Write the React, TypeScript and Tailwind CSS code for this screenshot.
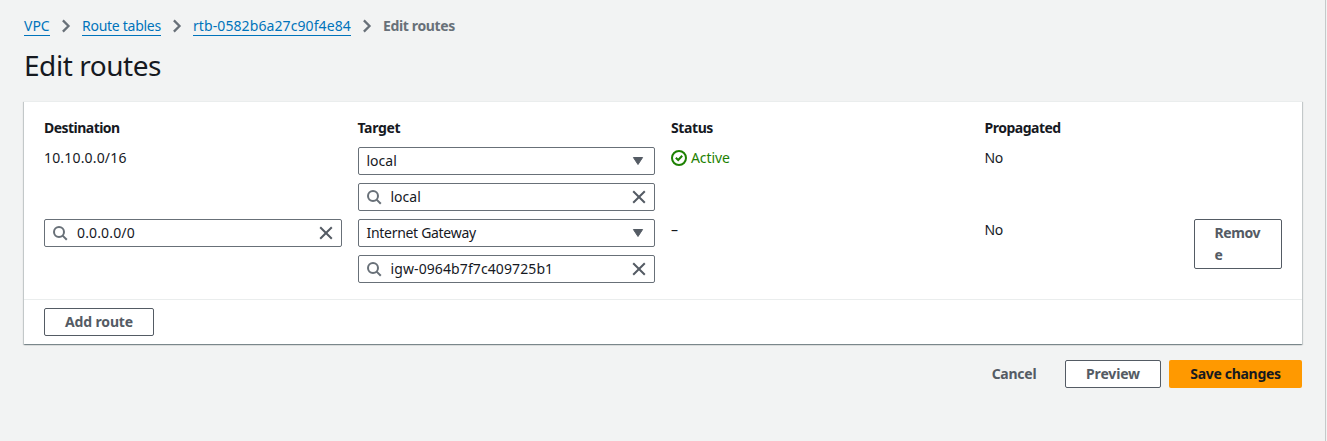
import type { ReactNode } from "react";

function Chevron() {
  return (
    <svg viewBox="0 0 16 16" className="size-4 shrink-0" fill="none" stroke="#687078" strokeWidth="2.3">
      <path d="M4.9 2.4 10.5 8l-5.6 5.6" />
    </svg>
  );
}

function SearchIcon() {
  return (
    <svg viewBox="0 0 16 16" className="size-4 shrink-0" fill="none" stroke="#687078" strokeWidth="2">
      <circle cx="7" cy="7" r="5" />
      <path d="m10.6 10.6 4.2 4.2" />
    </svg>
  );
}

function CloseIcon() {
  return (
    <svg viewBox="0 0 16 16" className="size-4 shrink-0" fill="none" stroke="#545b64" strokeWidth="2">
      <path d="m2.2 2.2 11.6 11.6M13.8 2.2 2.2 13.8" />
    </svg>
  );
}

function CaretDown() {
  return (
    <svg viewBox="0 0 16 16" className="size-4 shrink-0" fill="#545b64" stroke="#545b64" strokeLinejoin="round">
      <path d="M3.4 4.5h9.2L8 11.5z" />
    </svg>
  );
}

function StatusOk() {
  return (
    <svg viewBox="0 0 16 16" className="size-4 shrink-0" fill="none" stroke="#1d8102" strokeWidth="2">
      <circle cx="8" cy="8" r="7" />
      <path d="m4.8 7.8 2.4 2.2 4-4.2" />
    </svg>
  );
}

function Select({ children }: { children: ReactNode }) {
  return (
    <div className="flex h-7 items-center justify-between rounded-xs border border-[#687078] bg-white pr-2 pl-2">
      {children}
      <CaretDown />
    </div>
  );
}

function SearchInput({ children }: { children: ReactNode }) {
  return (
    <div className="flex h-7 items-center rounded-xs border border-[#687078] bg-white px-[7px]">
      <SearchIcon />
      <div className="ml-[9px] flex-1">{children}</div>
      <CloseIcon />
    </div>
  );
}

const button = "rounded-xs border border-[#545b64] bg-white font-bold text-[#545b64]";
const link = "h-[21px] self-start whitespace-nowrap border-b border-[#0073bb] leading-[22px]";

export default function App() {
  return (
    <div className="flex h-[441px] w-[1327px] bg-[#f2f3f3] font-['Noto_Sans',sans-serif] text-sm leading-[22px] text-[#16191f]">
      <div className="flex w-[1326px] flex-col border-r border-[#c5caca] pr-[23px] pl-6">
        <nav className="mt-[15px] flex h-[22px] items-center gap-2 text-[#0073bb]">
          <a className={`${link} w-[26px]`}>VPC</a>
          <Chevron />
          <a className={`${link} w-[79px] tracking-[-0.27px]`}>Route tables</a>
          <Chevron />
          <a className={`${link} w-[158px] tracking-[0.09px]`}>rtb-0582b6a27c90f4e84</a>
          <Chevron />
          <span className="font-bold tracking-[-0.36px] text-[#687078]">Edit routes</span>
        </nav>
        <h1 className="mt-[10px] text-[28px] leading-9 tracking-[-0.45px]">Edit routes</h1>

        <section className="mt-[18px] border-t border-[#eaeded] bg-white shadow-[0_1px_1px_0_rgba(0,28,36,0.3),1px_1px_1px_0_rgba(0,28,36,0.15),-1px_1px_1px_0_rgba(0,28,36,0.15)]">
          <div className="flex h-[197px] flex-col gap-2 px-5 pt-[15px]">
            <div className="grid grid-cols-12 gap-x-4 font-bold">
              <div className="col-span-3 tracking-[-0.53px]">Destination</div>
              <div className="col-span-3 tracking-[-0.35px]">Target</div>
              <div className="col-span-3 tracking-[-0.4px]">Status</div>
              <div className="col-span-2 tracking-[-0.5px]">Propagated</div>
            </div>
            <div className="grid grid-cols-12 gap-x-4">
              <div className="col-span-3 tracking-[0.17px]">10.10.0.0/16</div>
              <div className="col-span-3 flex flex-col gap-2">
                <Select>local</Select>
                <SearchInput>local</SearchInput>
              </div>
              <div className="col-span-3 flex h-[22px] items-center gap-1 tracking-[-0.1px] text-[#1d8102]">
                <StatusOk />
                Active
              </div>
              <div className="col-span-2 tracking-[-0.4px]">No</div>
            </div>
            <div className="grid grid-cols-12 items-start gap-x-4">
              <div className="col-span-3">
                <SearchInput>
                  <span className="tracking-[0.15px]">0.0.0.0/0</span>
                </SearchInput>
              </div>
              <div className="col-span-3 flex flex-col gap-2">
                <Select>
                  <span className="tracking-[-0.3px]">Internet Gateway</span>
                </Select>
                <SearchInput>
                  <span className="tracking-[0.1px]">igw-0964b7f7c409725b1</span>
                </SearchInput>
              </div>
              <div className="col-span-3">–</div>
              <div className="col-span-2 tracking-[-0.4px]">No</div>
              <button className={`${button} h-[50px] px-5 py-0.5 text-left tracking-[-0.4px]`}>
                Remov
                <br />e
              </button>
            </div>
          </div>
          <div className="flex h-[45px] items-center border-t border-[#eaeded] px-5">
            <button className={`${button} h-7 w-[110px] tracking-[-0.15px]`}>Add route</button>
          </div>
        </section>

        <div className="mt-4 flex justify-end gap-2 font-bold">
          <button className="h-7 w-[86px] tracking-[-0.25px] text-[#545b64]">Cancel</button>
          <button className={`${button} h-7 w-24 tracking-[-0.15px]`}>Preview</button>
          <button className="h-7 w-[133px] rounded-xs bg-[#ff9900] tracking-[-0.3px]">Save changes</button>
        </div>
      </div>
    </div>
  );
}
